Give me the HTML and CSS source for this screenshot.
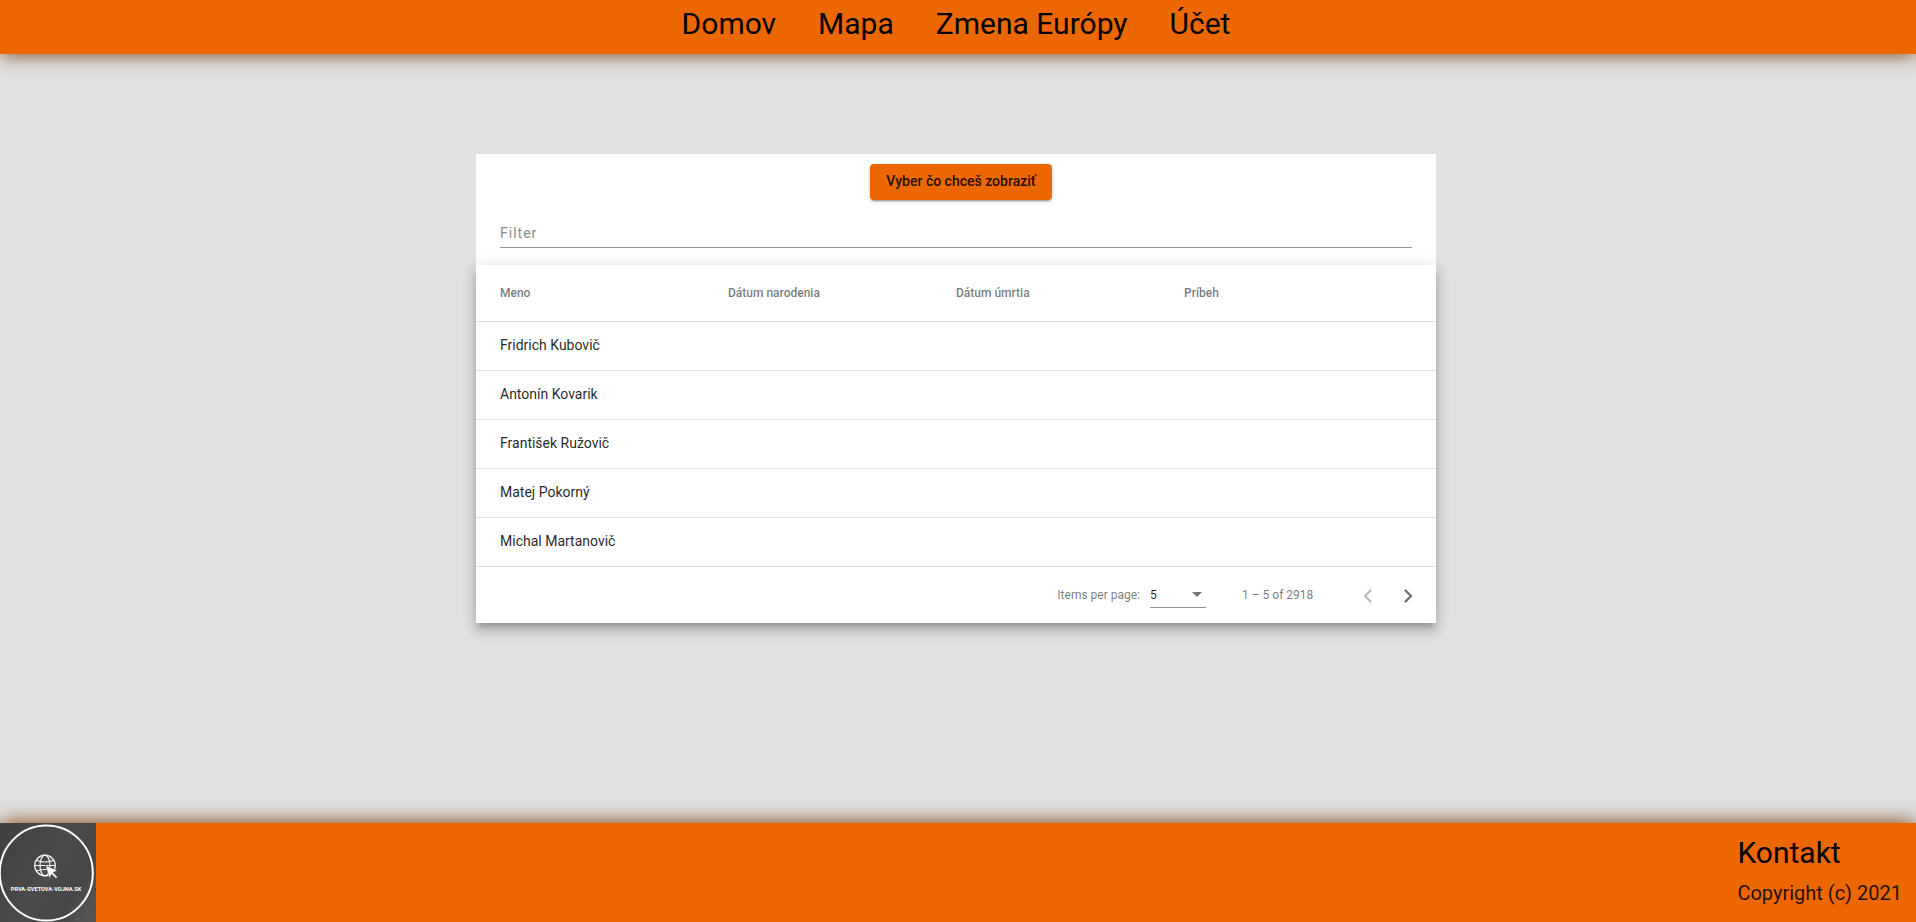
FILE: index.html
```html
<!DOCTYPE html>
<html lang="sk">
<head>
<meta charset="utf-8">
<meta name="viewport" content="width=device-width, initial-scale=1">
<title>Prvá svetová vojna</title>
<link rel="stylesheet" href="styles.css">
</head>
<body>
<header class="topbar">
  <nav class="nav">
    <a href="#domov">Domov</a>
    <a href="#mapa">Mapa</a>
    <a href="#zmena">Zmena Európy</a>
    <a href="#ucet">Účet</a>
  </nav>
</header>

<main class="content">
  <section class="card">
    <div class="actions">
      <button type="button" class="btn">Vyber čo chceš zobraziť</button>
    </div>
    <div class="filter">
      <input class="filter-input" type="text" placeholder="Filter" aria-label="Filter">
    </div>
    <div class="sheet">
      <table class="people">
        <thead>
          <tr><th scope="col">Meno</th><th scope="col">Dátum narodenia</th><th scope="col">Dátum úmrtia</th><th scope="col">Príbeh</th></tr>
        </thead>
        <tbody>
          <tr><td>Fridrich Kubovič</td><td></td><td></td><td></td></tr>
          <tr><td>Antonín Kovarik</td><td></td><td></td><td></td></tr>
          <tr><td>František Ružovič</td><td></td><td></td><td></td></tr>
          <tr><td>Matej Pokorný</td><td></td><td></td><td></td></tr>
          <tr><td>Michal Martanovič</td><td></td><td></td><td></td></tr>
        </tbody>
      </table>
      <div class="paginator">
        <label for="page-size">Items per page:</label>
        <select id="page-size" class="page-size">
          <option>5</option>
          <option>10</option>
          <option>20</option>
        </select>
        <span class="range">1 – 5 of 2918</span>
        <button type="button" class="icon-btn" aria-label="Previous page" disabled>
          <svg viewBox="0 0 24 24" width="28" height="28"><path d="M15.41 7.41L14 6l-6 6 6 6 1.41-1.41L10.83 12z"/></svg>
        </button>
        <button type="button" class="icon-btn" aria-label="Next page">
          <svg viewBox="0 0 24 24" width="28" height="28"><path d="M10 6L8.59 7.41 13.17 12l-4.58 4.59L10 18l6-6z"/></svg>
        </button>
      </div>
    </div>
  </section>
</main>

<footer class="footer">
  <svg class="logo" viewBox="0 0 96 99" width="96" height="99" role="img" aria-label="prva-svetova-vojna.sk">
    <defs>
      <linearGradient id="slate" x1="0" y1="0.2" x2="1" y2="0.8">
        <stop offset="0" stop-color="#424242"/>
        <stop offset="0.5" stop-color="#4a4a4a"/>
        <stop offset="0.8" stop-color="#464646"/>
        <stop offset="1" stop-color="#555"/>
      </linearGradient>
    </defs>
    <rect width="96" height="99" fill="url(#slate)"/>
    <ellipse cx="46.300" cy="50" rx="46.500" ry="47.500" fill="none" stroke="#fff" stroke-width="2"/>
    <g fill="none" stroke="#f4f4f4" stroke-width="1.200">
      <circle cx="45" cy="42.500" r="10.300"/>
      <ellipse cx="45" cy="42.500" rx="5" ry="10.300"/>
      <path d="M36.500 37.500Q45 40.500 53.500 37.500M34.700 42.500H55.300M36.500 48Q45 45 53.500 48"/>
    </g>
    <path d="M45.500 42.500L57.500 47.500L53 49.500L57.500 54L56 55.500L51.500 51L49.500 55.500Z" fill="#fff" stroke="#494949" stroke-width="0.500"/>
    <text class="logo-text" x="46" y="68" text-anchor="middle">PRVA-SVETOVA-VOJNA.SK</text>
  </svg>
  <div class="footer-text">
    <a class="contact" href="#kontakt">Kontakt</a>
    <span class="copyright">Copyright (c) 2021</span>
  </div>
</footer>
</body>
</html>
```
FILE: styles.css
```css
* {
  box-sizing: border-box;
}

body {
  margin: 0;
  min-height: 100vh;
  display: flex;
  flex-direction: column;
  background: #e1e1e1;
  color: rgba(0, 0, 0, 0.87);
  font-family: Roboto, "Noto Sans", sans-serif;
  font-size: 14px;
}

.topbar {
  background: #ed6700;
  padding: 4px 4px 10px 0;
  box-shadow: 0 0 20px rgb(125, 60, 10);
}

.nav {
  display: flex;
  justify-content: center;
  gap: 42px;
}

.nav a {
  color: #000;
  font-size: 30px;
  line-height: 40px;
  text-decoration: none;
}

.content {
  flex: 1;
  padding: 100px 20px 100px 16px;
}

.card {
  max-width: 960px;
  margin: 0 auto;
  background: #fff;
}

.actions {
  display: flex;
  justify-content: center;
  padding: 10px 0 0 10px;
}

.btn {
  height: 36px;
  padding: 0 16px 2px;
  border: 0;
  border-radius: 4px;
  background: #ed6700;
  color: rgba(0, 0, 0, 0.87);
  font: 500 14px/34px Roboto, "Noto Sans", sans-serif;
  box-shadow: 0 3px 1px -2px rgba(0, 0, 0, 0.2), 0 2px 2px rgba(0, 0, 0, 0.14), 0 1px 5px rgba(0, 0, 0, 0.12);
}

.filter {
  padding: 18px 24px 17px;
}

.filter-input {
  display: block;
  width: 100%;
  height: 30px;
  padding: 0;
  border: 0;
  border-bottom: 1px solid #949494;
  background: none;
  font: 400 14px/29px Roboto, "Noto Sans", sans-serif;
  letter-spacing: 1px;
}

.filter-input::placeholder {
  color: #8a8a8a;
  opacity: 1;
}

.sheet {
  background: #fff;
  box-shadow: 0 5px 5px -3px rgba(0, 0, 0, 0.2), 0 8px 10px 1px rgba(0, 0, 0, 0.14), 0 3px 14px 2px rgba(0, 0, 0, 0.12);
}

.people,
.people thead,
.people tbody {
  display: block;
}

.people tr {
  display: flex;
  align-items: center;
  height: 49px;
  padding: 0 24px;
  border-bottom: 1px solid #e0e0e0;
}

.people thead tr {
  height: 57px;
}

.people th,
.people td {
  flex: 1;
  padding: 0;
  text-align: left;
}

.people td {
  padding-bottom: 2px;
}

.people th {
  color: rgba(0, 0, 0, 0.54);
  font-size: 12px;
  font-weight: 500;
}

.paginator {
  display: flex;
  align-items: center;
  justify-content: flex-end;
  height: 56px;
  padding-right: 8px;
  color: rgba(0, 0, 0, 0.54);
  font-size: 12px;
}

.page-size {
  appearance: none;
  width: 56px;
  height: 26px;
  margin: 0 36px 0 10px;
  padding: 2px 0 0;
  border: 0;
  border-bottom: 1px solid #949494;
  border-radius: 0;
  background: url("data:image/svg+xml,%3Csvg xmlns='http://www.w3.org/2000/svg' width='10' height='5'%3E%3Cpath d='M0 0h10L5 5z' fill='%23757575'/%3E%3C/svg%3E") no-repeat right 4px center;
  color: rgba(0, 0, 0, 0.87);
  font: 400 12px/23px Roboto, "Noto Sans", sans-serif;
}

.range {
  min-width: 74px;
  margin-right: 32px;
}

.icon-btn {
  display: flex;
  align-items: center;
  justify-content: center;
  width: 40px;
  height: 40px;
  padding: 2px 0 0;
  border: 0;
  background: none;
  fill: #757575;
}

.icon-btn:disabled {
  fill: #bdbdbd;
}

.footer {
  display: flex;
  justify-content: space-between;
  align-items: center;
  background: #ed6700;
  color: #000;
  box-shadow: 0 0 20px rgb(125, 60, 10);
}

.logo {
  display: block;
}

.logo-text {
  fill: #fff;
  font: 700 5.6px "Liberation Sans Narrow", Roboto, sans-serif;
}

.footer-text {
  display: flex;
  flex-direction: column;
  gap: 5px;
  padding: 0 14px 5px 0;
}

.contact {
  color: #000;
  font-size: 30px;
  line-height: 40px;
  text-decoration: none;
}

.copyright {
  color: rgba(0, 0, 0, 0.87);
  font-size: 20px;
  line-height: 30px;
}
```
